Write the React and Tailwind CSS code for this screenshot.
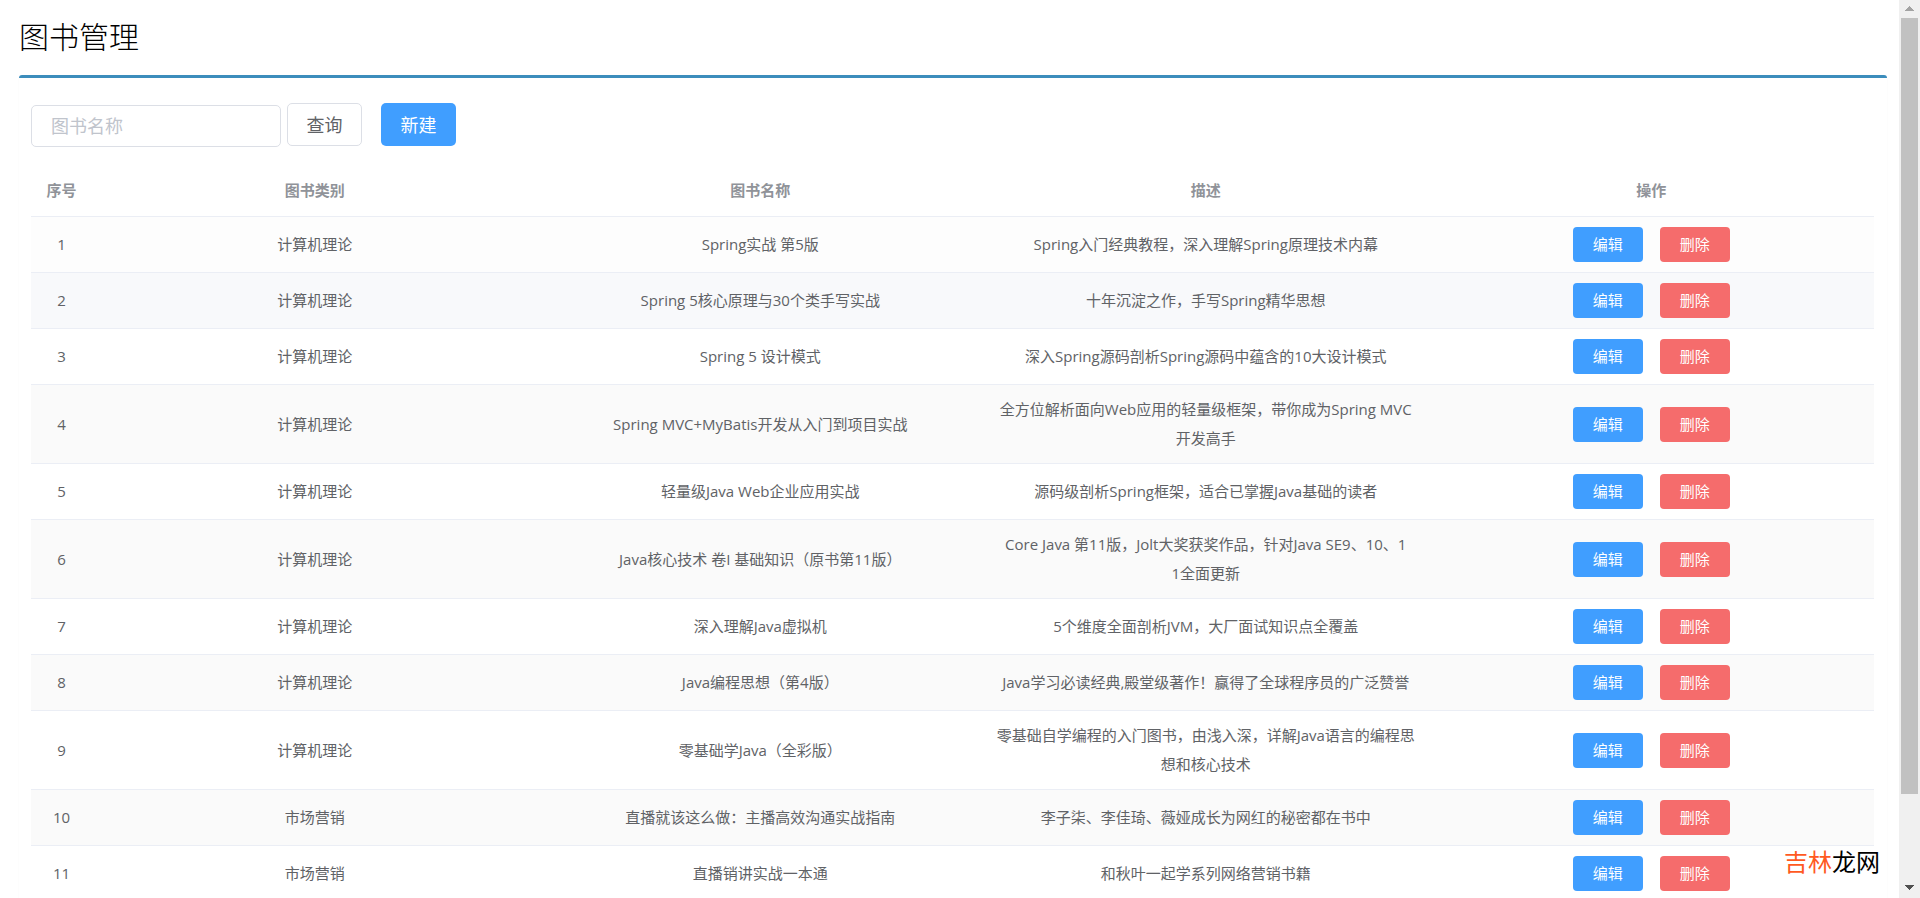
const books = [
  ['计算机理论', 'Spring实战 第5版', 'Spring入门经典教程，深入理解Spring原理技术内幕'],
  ['计算机理论', 'Spring 5核心原理与30个类手写实战', '十年沉淀之作，手写Spring精华思想'],
  ['计算机理论', 'Spring 5 设计模式', '深入Spring源码剖析Spring源码中蕴含的10大设计模式'],
  ['计算机理论', 'Spring MVC+MyBatis开发从入门到项目实战', '全方位解析面向Web应用的轻量级框架，带你成为Spring MVC开发高手'],
  ['计算机理论', '轻量级Java Web企业应用实战', '源码级剖析Spring框架，适合已掌握Java基础的读者'],
  ['计算机理论', 'Java核心技术 卷I 基础知识（原书第11版）', 'Core Java 第11版，Jolt大奖获奖作品，针对Java SE9、10、1\n1全面更新'],
  ['计算机理论', '深入理解Java虚拟机', '5个维度全面剖析JVM，大厂面试知识点全覆盖'],
  ['计算机理论', 'Java编程思想（第4版）', 'Java学习必读经典,殿堂级著作！赢得了全球程序员的广泛赞誉'],
  ['计算机理论', '零基础学Java（全彩版）', '零基础自学编程的入门图书，由浅入深，详解Java语言的编程思想和核心技术'],
  ['市场营销', '直播就该这么做：主播高效沟通实战指南', '李子柒、李佳琦、薇娅成长为网红的秘密都在书中'],
  ['市场营销', '直播销讲实战一本通', '和秋叶一起学系列网络营销书籍'],
]

const HIGHLIGHTED = 1

function rowBackground(i) {
  if (i === HIGHLIGHTED) return 'bg-[#f8f9fb]'
  if (i === 0) return 'bg-[#fdfdfd]'
  return i % 2 ? 'bg-[#fafafa]' : 'bg-white'
}

const headCell = 'border-b border-[#ebeef5] pb-[2px]'
const cell = 'border-b border-[#ebeef5] px-3 py-[10px] break-all whitespace-pre-line'

function Toolbar() {
  return (
    <form className="flex items-start text-lg" onSubmit={(e) => e.preventDefault()}>
      <input
        type="text"
        aria-label="图书名称"
        placeholder="图书名称"
        className="mt-[2px] h-[42px] w-[250px] rounded-[5px] border border-[#dcdfe6] px-[19px] text-[#606266] outline-none placeholder:text-[#c0c4cc]"
      />
      <button type="submit" className="ml-[6px] h-[43px] w-[75px] rounded-[5px] border border-[#dcdfe6] bg-white text-[#606266]">
        查询
      </button>
      <button type="button" className="ml-[19px] h-[43px] w-[75px] rounded-[5px] bg-[#409eff] text-white">
        新建
      </button>
    </form>
  )
}

function BookTable() {
  return (
    <table className="mt-[19px] w-full table-fixed border-separate border-spacing-0 text-center text-[15px] leading-[29px] text-[#606266]">
      <colgroup>
        <col className="w-[61px]" />
        <col />
        <col />
        <col />
        <col />
      </colgroup>
      <thead>
        <tr className="h-[51px] font-bold text-[#909399]">
          <th scope="col" className={headCell}>序号</th>
          <th scope="col" className={headCell}>图书类别</th>
          <th scope="col" className={headCell}>图书名称</th>
          <th scope="col" className={headCell}>描述</th>
          <th scope="col" className={headCell}>操作</th>
        </tr>
      </thead>
      <tbody>
        {books.map(([category, name, description], i) => (
          <tr key={name} className={rowBackground(i)}>
            <td className={cell}>{i + 1}</td>
            <td className={cell}>{category}</td>
            <td className={cell}>{name}</td>
            <td className={cell}>{description}</td>
            <td className={cell}>
              <div className="flex justify-center gap-[17px] text-white">
                <button type="button" className="h-[35px] w-[70px] rounded-[4px] bg-[#409eff]">编辑</button>
                <button type="button" className="h-[35px] w-[70px] rounded-[4px] bg-[#f56c6c]">删除</button>
              </div>
            </td>
          </tr>
        ))}
      </tbody>
    </table>
  )
}

function ScrollTrack() {
  return (
    <div aria-hidden="true" className="flex w-[21px] shrink-0 flex-col items-center bg-[#f0f0f0]">
      <svg viewBox="0 0 21 18" className="h-[18px] w-[21px] shrink-0" shapeRendering="crispEdges">
        <path d="M6 11 L10.5 6 L15 11 Z" fill="#a3a3a3" />
      </svg>
      <div className="w-[17px] grow-9 bg-[#c1c1c1]" />
      <div className="grow" />
      <svg viewBox="0 0 21 18" className="h-[18px] w-[21px] shrink-0" shapeRendering="crispEdges">
        <path d="M6 5 L15 5 L10.5 10 Z" fill="#505050" />
      </svg>
    </div>
  )
}

export default function App() {
  return (
    <div className="relative flex h-screen bg-white font-['Open_Sans','Noto_Sans_CJK_SC',sans-serif]">
      <main className="min-w-0 grow overflow-y-auto pr-3 pl-[19px] [scrollbar-width:none]">
        <h1 className="pt-[14px] pb-4 text-[30px] leading-[45px] font-light text-black">图书管理</h1>
        <section className="rounded-[3px] border-t-[3px] border-[#3c8dbc] pt-[25px] pr-[13px] pb-3 pl-3 shadow-[0_1px_1px_rgba(0,0,0,0.1)]">
          <Toolbar />
          <BookTable />
        </section>
      </main>
      <ScrollTrack />
      <p className="absolute right-10 bottom-5 text-2xl text-black">
        <span className="text-[#ff5a1f]">吉林</span>龙网
      </p>
    </div>
  )
}
